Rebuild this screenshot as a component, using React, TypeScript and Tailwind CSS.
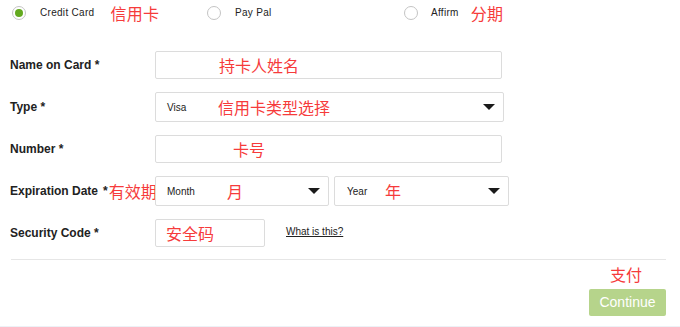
import type { ReactNode } from "react";

const RED = "text-[#f63b3b] font-['Noto_Sans_CJK_SC',sans-serif] font-normal text-[16px] leading-none whitespace-nowrap";

function Radio({ checked }: { checked?: boolean }) {
  return (
    <span className="flex h-[14px] w-[14px] shrink-0 items-center justify-center rounded-full border-[1.5px] border-[#c4c4c4] bg-white">
      {checked && <span className="h-[8px] w-[8px] rounded-full bg-[#63a91f]" />}
    </span>
  );
}

function Caret() {
  return (
    <svg width="12" height="6" viewBox="0 0 12 6" className="shrink-0" aria-hidden>
      <polygon points="0,0 12,0 6,6" fill="#1a1a1a" />
    </svg>
  );
}

function Row({ label, children, extra }: { label: string; children: ReactNode; extra?: ReactNode }) {
  return (
    <div className="mt-[13px] flex items-center first:mt-0">
      <div className="flex w-[145px] shrink-0 items-center whitespace-nowrap text-[12px] font-bold text-[#222]">
        <span className="shrink-0">{label}</span>
        {extra}
      </div>
      {children}
    </div>
  );
}

export default function App() {
  return (
    <div className="relative h-[327px] w-[680px] overflow-hidden bg-white font-['Liberation_Sans',Arial,sans-serif]">
      {/* payment method */}
      <div className="flex h-[25px] items-center pl-[12px] text-[10px] tracking-[0.3px] text-[#222]">
        <div className="flex w-[195px] items-center">
          <Radio checked />
          <span className="ml-[14px]">Credit Card</span>
          <span className={`ml-[16px] ${RED}`}>信用卡</span>
        </div>
        <div className="flex w-[197px] items-center">
          <Radio />
          <span className="ml-[14px]">Pay Pal</span>
        </div>
        <div className="flex items-center">
          <Radio />
          <span className="ml-[13px]">Affirm</span>
          <span className={`ml-[12px] ${RED}`}>分期</span>
        </div>
      </div>

      <div className="mt-[26px] pl-[10px]">
        <Row label="Name on Card *">
          <div className="flex h-[28px] w-[347px] items-center rounded-[2px] border border-[#dcdcdc] pl-[63px]">
            <span className={RED}>持卡人姓名</span>
          </div>
        </Row>

        <Row label="Type *">
          <div className="flex h-[30px] w-[349px] items-center rounded-[2px] border border-[#dcdcdc] pl-[11px] pr-[8px]">
            <span className="w-[51px] text-[10px] text-[#222]">Visa</span>
            <span className={RED}>信用卡类型选择</span>
            <span className="flex-1" />
            <Caret />
          </div>
        </Row>

        <Row label="Number *">
          <div className="flex h-[28px] w-[347px] items-center rounded-[2px] border border-[#dcdcdc] pl-[77px]">
            <span className={RED}>卡号</span>
          </div>
        </Row>

        <Row
          label="Expiration Date"
          extra={
            <>
              <span className="ml-[5px] shrink-0">*</span>
              <span className={`ml-[1px] shrink-0 text-[15px] ${RED}`}>有效期</span>
            </>
          }
        >
          <div className="flex h-[30px] w-[174px] items-center rounded-[2px] border border-[#dcdcdc] pl-[11px] pr-[8px]">
            <span className="w-[60px] text-[10px] text-[#222]">Month</span>
            <span className={RED}>月</span>
            <span className="flex-1" />
            <Caret />
          </div>
          <div className="ml-[5px] flex h-[30px] w-[175px] items-center rounded-[2px] border border-[#dcdcdc] pl-[12px] pr-[8px]">
            <span className="w-[38px] text-[10px] text-[#222]">Year</span>
            <span className={RED}>年</span>
            <span className="flex-1" />
            <Caret />
          </div>
        </Row>

        <Row label="Security Code *">
          <div className="flex h-[28px] w-[110px] items-center rounded-[2px] border border-[#dcdcdc] pl-[10px]">
            <span className={RED}>安全码</span>
          </div>
          <a className="ml-[21px] -mt-[3px] text-[10px] text-[#222] underline">What is this?</a>
        </Row>
      </div>

      <div className="ml-[11px] mt-[12px] h-px w-[655px] bg-[#e6e6e6]" />

      <div className="flex flex-col items-end pr-[14px]">
        <span className={`mt-[6px] mr-[24px] ${RED}`}>支付</span>
        <button className="mt-[7px] flex h-[27px] w-[77px] items-center justify-center rounded-[2px] bg-[#b6d48b] text-[14px] text-white">
          Continue
        </button>
      </div>

      <div className="absolute bottom-0 left-0 h-px w-full bg-[#edf1f6]" />
    </div>
  );
}
